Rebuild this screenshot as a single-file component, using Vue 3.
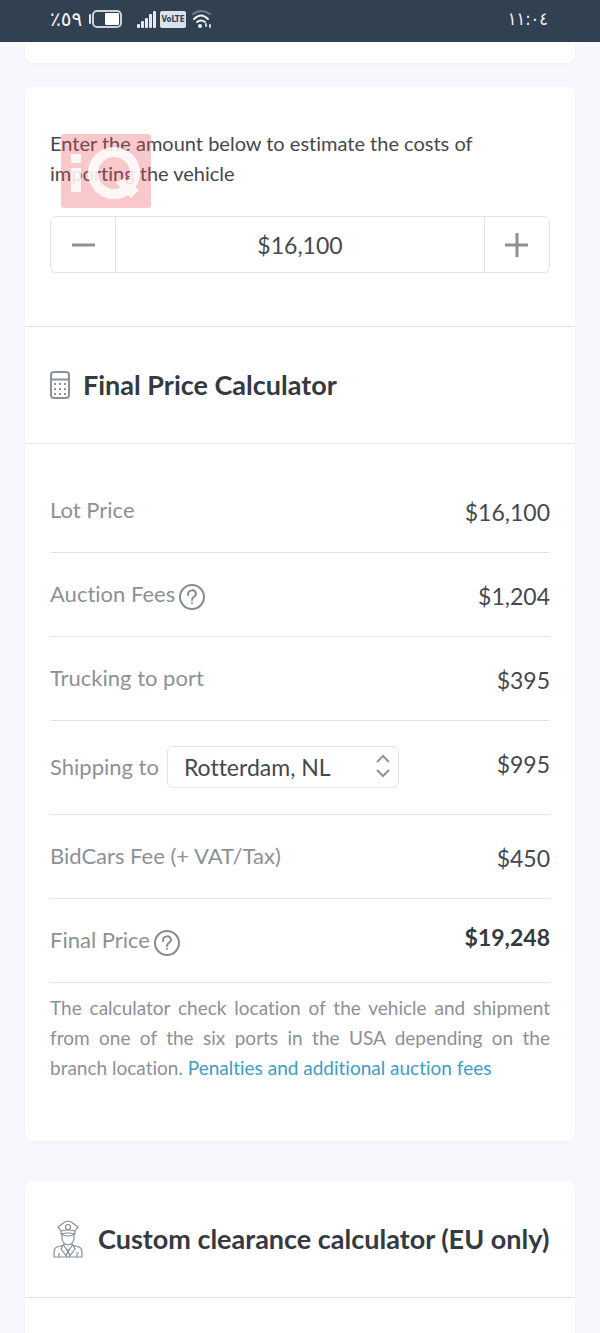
<script setup>
import { ref, computed } from 'vue'

const amount = ref(16100)
const port = ref('Rotterdam, NL')
const money = (n) => '$' + n.toLocaleString('en-US')
const amountText = computed(() => money(amount.value))
const total = computed(() => money(amount.value + 1204 + 395 + 995 + 450 + 104))

const step = (delta) => {
  amount.value = Math.max(0, amount.value + delta)
}
const readAmount = (event) => {
  amount.value = Number(event.target.value.replace(/\D/g, ''))
}

const rows = computed(() => [
  { id: 'lot', label: 'Lot Price', value: amountText.value },
  { id: 'auction', label: 'Auction Fees', value: '$1,204', help: true },
  { id: 'truck', label: 'Trucking to port', value: '$395' },
  { id: 'ship', label: 'Shipping to', value: '$995', select: true },
  { id: 'fee', label: 'BidCars Fee (+ VAT/Tax)', value: '$450' },
  { id: 'final', label: 'Final Price', value: total.value, help: true, strong: true },
])
</script>

<template>
  <div class="page">
    <header class="status">
      <div class="status-group">
        <span class="percent">٪٥٩</span>
        <svg class="battery" width="34" height="20" viewBox="0 0 34 20" aria-hidden="true">
          <rect x="1" y="5" width="2" height="10" rx="1" fill="#dfe6ee" />
          <rect x="5" y="2" width="28" height="16" rx="4" fill="none" stroke="#c9d2dc" stroke-width="2" />
          <rect x="17" y="4" width="14" height="12" rx="1" fill="#fff" />
        </svg>
        <svg class="signal" width="20" height="20" viewBox="0 0 20 20" fill="#e4eaf0" aria-hidden="true">
          <rect x="1" y="15" width="3" height="4" rx="1" /><rect x="5" y="12" width="3" height="7" rx="1" />
          <rect x="9" y="9" width="3" height="10" rx="1" /><rect x="13" y="5" width="3" height="14" rx="1" />
          <rect x="17" y="2" width="3" height="17" rx="1" />
        </svg>
        <span class="volte">VoLTE</span>
        <svg class="wifi" width="22" height="20" viewBox="0 0 22 20" fill="none" stroke-width="2" stroke-linecap="round" aria-hidden="true">
          <path d="M2 5Q10-1 19 5" stroke="#71808e" />
          <path d="M3 10Q10 3 17 10M6 13Q10 10 14 13" stroke="#eef3f8" />
          <circle cx="9" cy="17" r="2" fill="#eef3f8" />
          <path d="M15 15v2M19 16v2" stroke="#cdd6df" />
        </svg>
      </div>
      <time class="clock">١١:٠٤</time>
    </header>

    <main class="content">
      <div class="card card-tail"></div>

      <section class="card">
        <div class="estimate">
          <label class="intro" for="amount">Enter the amount below to estimate the costs of importing the vehicle</label>
          <svg class="watermark" width="90" height="74" viewBox="0 0 90 74" aria-hidden="true">
            <rect width="90" height="74" rx="3" fill="#ea4a52" fill-opacity=".3" />
            <g opacity=".85">
              <rect x="10" y="20" width="10" height="9" fill="#fff" />
              <rect x="10" y="34" width="10" height="24" fill="#fff" />
              <circle cx="53" cy="39" r="21" fill="none" stroke="#fff" stroke-width="10" />
              <path d="M55 49L63 44L78 56L70 64Z" fill="#fff" />
            </g>
          </svg>
          <div class="stepper">
            <button type="button" aria-label="Decrease" @click="step(-100)">
              <svg width="24" height="24" viewBox="0 0 24 24" aria-hidden="true"><path d="M1 12H24" stroke="#8d9196" stroke-width="3" /></svg>
            </button>
            <input id="amount" type="text" inputmode="numeric" :value="amountText" @change="readAmount" />
            <button type="button" aria-label="Increase" @click="step(100)">
              <svg width="24" height="24" viewBox="0 0 24 24" aria-hidden="true"><path d="M0 12H23M12 0V24" stroke="#8d9196" stroke-width="3" /></svg>
            </button>
          </div>
        </div>

        <div class="heading">
          <svg width="20" height="28" viewBox="0 0 20 28" fill="none" stroke="#89919c" aria-hidden="true">
            <rect x="1" y="1" width="18" height="26" rx="3" stroke-width="2" />
            <path d="M1 8.500H19" stroke-width="2" />
            <path d="M4 13H16M4 18H16M4 23H16" stroke-width="2" stroke-dasharray="2 3" />
          </svg>
          <h2>Final Price Calculator</h2>
        </div>

        <div class="costs">
          <table>
            <tbody>
              <tr v-for="row in rows" :key="row.id" :class="{ tall: row.select, strong: row.strong }">
                <th scope="row">
                  <div class="label">
                    <label v-if="row.select" for="port">{{ row.label }}</label>
                    <span v-else>{{ row.label }}</span>
                    <button v-if="row.help" type="button" class="help" :aria-label="'About ' + row.label">
                      <svg width="28" height="28" viewBox="0 0 28 28" fill="none" stroke="#868a91" stroke-width="2" aria-hidden="true">
                        <circle cx="14" cy="14" r="12" />
                        <path d="M10 12C10 6 18 6 18 11C18 14 14 13 14 17" stroke-linecap="round" />
                        <circle cx="14" cy="20" r="1" fill="#868a91" stroke="none" />
                      </svg>
                    </button>
                    <div v-if="row.select" class="picker">
                      <select id="port" v-model="port">
                        <option>Rotterdam, NL</option>
                      </select>
                      <svg class="chevrons" width="14" height="24" viewBox="0 0 14 24" fill="none" stroke="#8f9399" stroke-width="2" aria-hidden="true">
                        <path d="M1 8L7 2L13 8M1 16L7 22L13 16" />
                      </svg>
                    </div>
                  </div>
                </th>
                <td>{{ row.value }}</td>
              </tr>
            </tbody>
          </table>
          <p class="note">
            The calculator check location of the vehicle and shipment from one of the six ports in the USA depending on the branch location.
            <a href="#fees">Penalties and additional auction fees</a>
          </p>
        </div>
      </section>

      <section class="card card-last">
        <div class="heading heading-customs">
          <svg width="30" height="38" viewBox="0 0 30 38" fill="none" stroke="#858d98" stroke-width="1.200" stroke-linejoin="round" aria-hidden="true">
            <path d="M8 11L5 7C9 5 11 1 15 1S21 5 25 7L22 11Q15 9 8 11Z" />
            <circle cx="15" cy="7" r="2.500" />
            <path d="M8 11V14Q15 12 22 14V11M8 14Q15 18 22 14" />
            <path d="M9 15V19Q10 24 15 25Q20 24 21 19V15" />
            <path d="M11 23V26L15 31L19 26V23" />
            <path d="M11 25L4 27Q1 28 1 33V37H29V33Q29 28 26 27L19 25" />
            <path d="M10 25L8 29L14 37M20 25L22 29L16 37M13 29L15 31L17 29M15 31L13 36M15 31L17 36M6 33V37M24 34V37M23 33H26" />
          </svg>
          <h2>Custom clearance calculator (EU only)</h2>
        </div>
      </section>
    </main>
  </div>
</template>

<style>
body {
  margin: 0;
  background: #f7f7fe;
}
</style>

<style scoped>
.page {
  min-height: 100vh;
  display: flex;
  flex-direction: column;
  background: #f7f7fe;
  color: #45484d;
  font-family: Lato, "Noto Sans", sans-serif;
  font-variant-ligatures: none;
}
* {
  box-sizing: border-box;
}
.status {
  height: 42px;
  flex: none;
  display: flex;
  justify-content: space-between;
  padding: 0 52px 4px 50px;
  align-items: center;
  background: #314151;
  color: #f1f5f9;
  font-family: "DejaVu Sans Condensed", "DejaVu Sans", sans-serif;
}
.status-group {
  display: flex;
  align-items: center;
}
.percent,
.clock {
  font-size: 18px;
  line-height: 24px;
}
.percent {
  min-width: 33px;
  font-family: "DejaVu Sans", sans-serif;
  font-size: 20px;
}
.battery {
  margin-left: 5px;
}
.signal {
  margin-left: 14px;
}
.volte {
  margin-left: 4px;
  width: 26px;
  height: 17px;
  border-radius: 2px;
  background: #dce2e9;
  color: #314151;
  font: 700 8px/17px "DejaVu Sans Condensed", sans-serif;
  text-align: center;
}
.wifi {
  margin-left: 5px;
}
.content {
  flex: 1;
  display: flex;
  flex-direction: column;
  padding: 0 25px;
}
.card {
  background: #fff;
  border-radius: 8px;
  box-shadow: 0 1px 3px rgba(60, 60, 100, 0.04);
}
.card-tail {
  height: 21px;
  margin-bottom: 24px;
  border-radius: 0 0 8px 8px;
}
.card-last {
  flex: 1;
  margin-top: 40px;
  padding-bottom: 35px;
  border-radius: 8px 8px 0 0;
}
.estimate {
  position: relative;
  padding: 41px 25px 53px;
}
.intro {
  display: block;
  max-width: 460px;
  margin-bottom: 28px;
  font-size: 20px;
  line-height: 30px;
}
.watermark {
  position: absolute;
  left: 36px;
  top: 47px;
  pointer-events: none;
}
.stepper {
  display: flex;
  height: 57px;
  border: 1px solid #e2e3e5;
  border-radius: 6px;
}
.stepper button {
  flex: none;
  width: 64px;
  padding: 0;
  border: 0;
  background: none;
  display: flex;
  align-items: center;
  justify-content: center;
}
.stepper input {
  flex: 1;
  min-width: 0;
  padding: 0;
  border: solid #e2e3e5;
  border-width: 0 1px;
  background: none;
  color: #45484d;
  font: 400 23px/30px Lato, sans-serif;
  text-align: center;
}
.heading {
  display: flex;
  align-items: center;
  gap: 13px;
  height: 118px;
  padding: 0 25px;
  border-top: 1px solid #e2e3e5;
  border-bottom: 1px solid #e2e3e5;
}
.heading-customs {
  height: 117px;
  border-top: 0;
  gap: 15px;
  padding-left: 28px;
}
h2 {
  margin: 0;
  color: #343a40;
  font-size: 27px;
  line-height: 34px;
  font-weight: 700;
  white-space: nowrap;
}
.costs {
  padding: 25px 25px 58px;
}
table {
  width: 100%;
  border-collapse: separate;
  border-spacing: 0;
}
tr {
  height: 84px;
}
.tall {
  height: 94px;
}
th,
td {
  padding: 0;
  border-bottom: 1px solid #e2e3e5;
}
th {
  padding-bottom: 2px;
  color: #8d9097;
  font-size: 22px;
  line-height: 30px;
  font-weight: 400;
  text-align: left;
  white-space: nowrap;
}
.label {
  display: flex;
  align-items: center;
}
td {
  padding-top: 28px;
  vertical-align: top;
  font-size: 23px;
  line-height: 30px;
  text-align: right;
}
.strong td {
  padding-top: 23px;
  color: #343a40;
  font-weight: 700;
}
.help {
  height: 28px;
  margin: 6px 0 0 3px;
  padding: 0;
  border: 0;
  background: none;
}
.help svg {
  display: block;
}
.picker {
  position: relative;
  margin-left: 8px;
}
select {
  appearance: none;
  display: block;
  width: 232px;
  height: 42px;
  padding: 0 40px 0 16px;
  border: 1px solid #e2e3e5;
  border-radius: 6px;
  background: #fff;
  color: #45484d;
  font: 400 23px/30px Lato, sans-serif;
  font-variant-ligatures: none;
}
.chevrons {
  position: absolute;
  right: 9px;
  top: 8px;
  pointer-events: none;
}
.note {
  margin: 10px 0 0;
  color: #8d9097;
  font-size: 19px;
  line-height: 30px;
  text-align: justify;
}
.note a {
  color: #3f9cc6;
  text-decoration: none;
}
</style>
